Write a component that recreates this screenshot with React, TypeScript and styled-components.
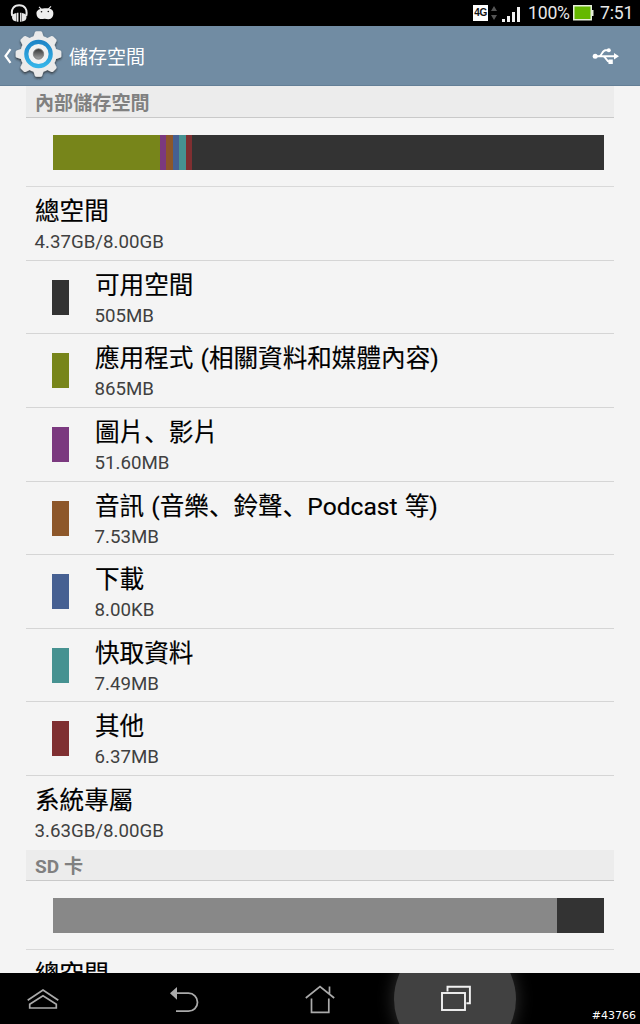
import React from 'react';
import styled, { createGlobalStyle } from 'styled-components';

const Global = createGlobalStyle`
  * { box-sizing: border-box; }
  body { margin: 0; background: #f4f4f4; font-family: Roboto, "Noto Sans CJK TC", sans-serif; overflow: hidden; }
`;

const Screen = styled.div`
  width: 640px;
  height: 1024px;
  display: flex;
  flex-direction: column;
  overflow: hidden;
  background: #f4f4f4;
`;

const StatusBar = styled.header`
  height: 26px;
  flex: none;
  display: flex;
  align-items: center;
  justify-content: space-between;
  padding: 0 7px 0 10px;
  background: #000;
  color: #e8e8e8;
`;

const StatusGroup = styled.div`
  display: flex;
  align-items: center;
  height: 26px;
`;

const StatusText = styled.span<{ $width: number; $left: number }>`
  width: ${(p) => p.$width}px;
  margin-left: ${(p) => p.$left}px;
  font-size: 17.6px;
  line-height: 26px;
  letter-spacing: -0.2px;
  white-space: nowrap;
`;

const NetworkBadge = styled.span`
  width: 15px;
  height: 16px;
  background: #fff;
  color: #111;
  font: bold 10px/16px "Liberation Sans", sans-serif;
  letter-spacing: -0.4px;
  text-align: center;
`;

const ActionBar = styled.nav`
  height: 60px;
  flex: none;
  display: flex;
  align-items: center;
  padding: 0 20px 0 3px;
  background: #718ca3;
  border-bottom: 1px solid #647f96;
`;

const ActionTitle = styled.h1`
  flex: 1;
  margin: 0 0 0 5px;
  padding-top: 3px;
  font-size: 19px;
  line-height: 57px;
  font-weight: 400;
  color: #fff;
`;

const Content = styled.main`
  flex: 1;
  min-height: 0;
  overflow: hidden;
  padding: 0 26px;
`;

const SectionHeader = styled.h2<{ $height: number }>`
  height: ${(p) => p.$height}px;
  margin: 0;
  padding-left: 9px;
  display: flex;
  align-items: center;
  background: #ececec;
  border-bottom: 1px solid #c9c9c9;
  color: #808080;
  font-size: 19.1px;
  font-weight: 700;
`;

const UsageRow = styled.div`
  height: 69px;
  padding: 17px 10px 0 27px;
  border-bottom: 1px solid #d9d9d9;
`;

const UsageBar = styled.div`
  display: flex;
  height: 35px;
`;

const Segment = styled.div<{ $color: string; $share: number }>`
  flex: ${(p) => p.$share} 0 0;
  background: ${(p) => p.$color};
`;

const Row = styled.div<{ $last?: boolean }>`
  height: 73.65px;
  display: flex;
  border-bottom: ${(p) => (p.$last ? 'none' : '1px solid #d5d5d5')};
`;

const Swatch = styled.div<{ $color: string }>`
  width: 17px;
  height: 35px;
  margin: 19px 0 0 26px;
  background: ${(p) => p.$color};
`;

const Labels = styled.div<{ $indent: number }>`
  margin-left: ${(p) => p.$indent}px;
  padding-top: 8px;
`;

const Title = styled.div`
  height: 33px;
  font-size: 24.6px;
  line-height: 34px;
  color: #000;
  word-spacing: 1px;
  -webkit-text-stroke: 0.15px #000;
  white-space: nowrap;
`;

const Comma = styled.span`
  font-family: "Noto Sans CJK JP", sans-serif;
  line-height: 0;
`;

const Summary = styled.div`
  height: 26px;
  margin-left: -0.5px;
  font-size: 18.7px;
  line-height: 28px;
  color: #404040;
  white-space: nowrap;
`;

const NavBar = styled.footer`
  height: 51px;
  flex: none;
  position: relative;
  overflow: hidden;
  display: flex;
  align-items: center;
  background: #000;
`;

const NavButton = styled.div<{ $width: number; $active?: boolean }>`
  width: ${(p) => p.$width}px;
  height: 122px;
  flex: none;
  display: flex;
  align-items: center;
  justify-content: center;
  border-radius: 50%;
  background: ${(p) => (p.$active ? '#414141' : 'transparent')};
  box-shadow: ${(p) => (p.$active ? '0 0 18px #333' : 'none')};
`;

const NavGap = styled.div<{ $width: number }>`
  width: ${(p) => p.$width}px;
  flex: none;
`;

const Stamp = styled.span`
  position: absolute;
  right: 4px;
  bottom: 1px;
  font: 11px/14px "DejaVu Sans", sans-serif;
  color: #fff;
`;

const categories = [
  { color: '#333333', title: '可用空間', size: '505MB' },
  { color: '#77851a', title: '應用程式 (相關資料和媒體內容)', size: '865MB' },
  { color: '#7b397f', title: '圖片、影片', size: '51.60MB' },
  { color: '#8d572a', title: '音訊 (音樂、鈴聲、Podcast 等)', size: '7.53MB' },
  { color: '#466092', title: '下載', size: '8.00KB' },
  { color: '#469291', title: '快取資料', size: '7.49MB' },
  { color: '#7f2f31', title: '其他', size: '6.37MB' },
];

const internalUsage = [
  { color: '#77851a', share: 107 },
  { color: '#7b397f', share: 6.4 },
  { color: '#8d572a', share: 6.4 },
  { color: '#466092', share: 6.4 },
  { color: '#469291', share: 6.4 },
  { color: '#7f2f31', share: 6.4 },
  { color: '#333333', share: 412 },
];

const sdUsage = [
  { color: '#888888', share: 504 },
  { color: '#333333', share: 47 },
];

const withCommas = (text: string) =>
  text.split(/(、)/).map((part, i) => (part === '、' ? <Comma key={i}>{part}</Comma> : part));

const Headphones = () => (
  <svg width="18" height="20" viewBox="0 0 18 20" fill="none" stroke="#e8e8e8">
    <path d="M2.300 13C.5 6 4 2.300 9.200 2.300S17.800 6 16.200 13" strokeWidth="2" />
    <path d="M6.500 10v8.500C3.500 18.200 2 16.500 2 14.200S3.500 10.300 6.500 10zM12 10v8.500c3-.3 4.500-2 4.500-4.300S15 10.300 12 10z" fill="#e8e8e8" stroke="none" />
    <path d="M7.700 9.800v9M10.800 9.800v9" strokeWidth="1.500" />
  </svg>
);

const Jellybean = () => (
  <svg width="18" height="16" viewBox="0 0 18 16" style={{ marginLeft: 8 }}>
    <path d="M3 1.800l3 3M15 1.300l-3 3" stroke="#eee" strokeWidth="1.100" />
    <path d="M.5 9C0 5.500 3.500 3.500 8.500 3.300S17 4 17.300 7.500c.4 4-1.500 6.500-4.800 6.700-1.500.1-2.500-.6-4-.5-1.500.1-2.600.6-4.200.3C2 13.500.7 11.500.5 9z" fill="#eee" />
    <circle cx="5.500" cy="6.800" r=".8" fill="#111" />
    <circle cx="12.300" cy="6.500" r=".8" fill="#111" />
  </svg>
);

const DataArrows = () => (
  <svg width="8" height="16" viewBox="0 0 8 16" fill="#555" style={{ marginLeft: 2 }}>
    <path d="M1 6l3-5 3 5zM1 10l3 5 3-5z" />
  </svg>
);

const Signal = () => (
  <svg width="18" height="16" viewBox="0 0 18 16" fill="#f2f2f2" style={{ marginLeft: 4, marginTop: 2 }}>
    <path d="M0 13h3v3H0zM5 10h3v6H5zM10 6h3v10h-3zM15 1h3v15h-3z" />
  </svg>
);

const Battery = () => (
  <svg width="21" height="16" viewBox="0 0 21 16">
    <path d="M18 5h2.500v6H18z" fill="#e6efd9" />
    <rect x=".75" y=".75" width="17.500" height="14" fill="#65b800" stroke="#e6efd9" strokeWidth="1.500" />
  </svg>
);

const BackChevron = () => (
  <svg width="9" height="16" viewBox="0 0 9 16" fill="none" stroke="#fff" strokeWidth="2.200">
    <path d="M7.500 1.200L2.500 8l5 6.800" />
  </svg>
);

const teeth = [0, 45, 90, 135, 180, 225, 270, 315];

const SettingsGear = () => (
  <svg width="52" height="52" viewBox="-26.500 -24 52 52" style={{ overflow: 'visible' }}>
    <defs>
      <linearGradient id="ring" x1="0" y1="0" x2="0" y2="1">
        <stop offset="0" stopColor="#1f86c8" />
        <stop offset="1" stopColor="#35b4e8" />
      </linearGradient>
      <linearGradient id="hub" x1="0" y1="0" x2="0" y2="1">
        <stop offset="0" stopColor="#333" />
        <stop offset="1" stopColor="#a5a5a5" />
      </linearGradient>
      <filter id="drop" x="-20%" y="-20%" width="140%" height="150%">
        <feDropShadow dx="0" dy="1.500" stdDeviation="1" floodColor="#222" floodOpacity=".8" />
      </filter>
    </defs>
    <g filter="url(#drop)" fill="#eaeaea">
      {teeth.map((a) => (
        <path key={a} d="M-5.500-16L-3.500-22Q-3-22.800-2-22.800H2Q3-22.800 3.500-22L5.500-16z" transform={`rotate(${a})`} />
      ))}
      <circle r="18.300" fill="#ebebeb" />
    </g>
    <circle r="12.200" fill="#f1f1f1" stroke="url(#ring)" strokeWidth="4.200" />
    <circle r="5.200" fill="url(#hub)" stroke="#777" strokeWidth=".8" />
  </svg>
);

const Usb = () => (
  <svg width="28" height="18" viewBox="0 0 28 18" fill="none" stroke="#fff" strokeWidth="1.900">
    <path d="M3 9.200h20M7 9.200c3 0 3-6 6.500-6H17M11 9.200c3 0 3 5.500 6.500 5.500H19" />
    <circle cx="3.200" cy="9.200" r="2.500" fill="#fff" stroke="none" />
    <circle cx="16.800" cy="3.300" r="2" fill="#fff" stroke="none" />
    <path d="M22 6l5 3.200-5 3.200zM16.500 12.500h4.300v4.500h-4.300z" fill="#fff" stroke="none" />
  </svg>
);

const Launcher = () => (
  <svg width="32" height="22" viewBox="0 0 32 22" fill="none" stroke="#aaa" strokeWidth="1.700">
    <path d="M.7 12.300L16 2l15.300 10.300" />
    <path d="M2.700 16.300L16 7.800l13.300 8.500V20H2.700z" />
  </svg>
);

const Back = () => (
  <svg width="30" height="28" viewBox="0 0 30 28" fill="none">
    <path d="M6 8.200h13.500a9 9 0 0 1 0 18H7" stroke="#aaa" strokeWidth="1.800" />
    <path d="M1 8.200L8 2v12.700z" fill="#aaa" />
  </svg>
);

const Home = () => (
  <svg width="30" height="30" viewBox="0 0 30 30" fill="none" stroke="#aaa" strokeWidth="1.700">
    <path d="M.8 14L15 2.500 29.200 14M24.500 2.500v8M6.500 14.500v13.800h17.300V14.500" />
  </svg>
);

const Recents = () => (
  <svg width="32" height="28" viewBox="-1 0.500 32 28" fill="none" stroke="#f2f2f2" strokeWidth="1.900">
    <rect x="2" y="8.500" width="23" height="17" />
    <path d="M7.500 7V2.300h22.400v16.400h-3.500" />
  </svg>
);

export default function App() {
  return (
    <Screen>
      <Global />
      <StatusBar>
        <StatusGroup>
          <Headphones />
          <Jellybean />
        </StatusGroup>
        <StatusGroup>
          <NetworkBadge>4G</NetworkBadge>
          <DataArrows />
          <Signal />
          <StatusText $width={45} $left={8}>100%</StatusText>
          <Battery />
          <StatusText $width={33} $left={6}>7:51</StatusText>
        </StatusGroup>
      </StatusBar>
      <ActionBar>
        <BackChevron />
        <SettingsGear />
        <ActionTitle>儲存空間</ActionTitle>
        <Usb />
      </ActionBar>
      <Content>
        <SectionHeader $height={32}>內部儲存空間</SectionHeader>
        <UsageRow>
          <UsageBar>
            {internalUsage.map((s) => (
              <Segment key={s.color} $color={s.color} $share={s.share} />
            ))}
          </UsageBar>
        </UsageRow>
        <Row>
          <Labels $indent={9}>
            <Title>總空間</Title>
            <Summary>4.37GB/8.00GB</Summary>
          </Labels>
        </Row>
        {categories.map((c) => (
          <Row key={c.title}>
            <Swatch $color={c.color} />
            <Labels $indent={26}>
              <Title>{withCommas(c.title)}</Title>
              <Summary>{c.size}</Summary>
            </Labels>
          </Row>
        ))}
        <Row $last>
          <Labels $indent={9}>
            <Title>系統專屬</Title>
            <Summary>3.63GB/8.00GB</Summary>
          </Labels>
        </Row>
        <SectionHeader $height={31}>SD 卡</SectionHeader>
        <UsageRow>
          <UsageBar>
            {sdUsage.map((s) => (
              <Segment key={s.color} $color={s.color} $share={s.share} />
            ))}
          </UsageBar>
        </UsageRow>
        <Row $last>
          <Labels $indent={9}>
            <Title>總空間</Title>
          </Labels>
        </Row>
      </Content>
      <NavBar>
        <NavGap $width={13} />
        <NavButton $width={60}><Launcher /></NavButton>
        <NavGap $width={81} />
        <NavButton $width={60}><Back /></NavButton>
        <NavGap $width={75} />
        <NavButton $width={61}><Home /></NavButton>
        <NavGap $width={44} />
        <NavButton $width={122} $active><Recents /></NavButton>
        <Stamp>#43766</Stamp>
      </NavBar>
    </Screen>
  );
}
